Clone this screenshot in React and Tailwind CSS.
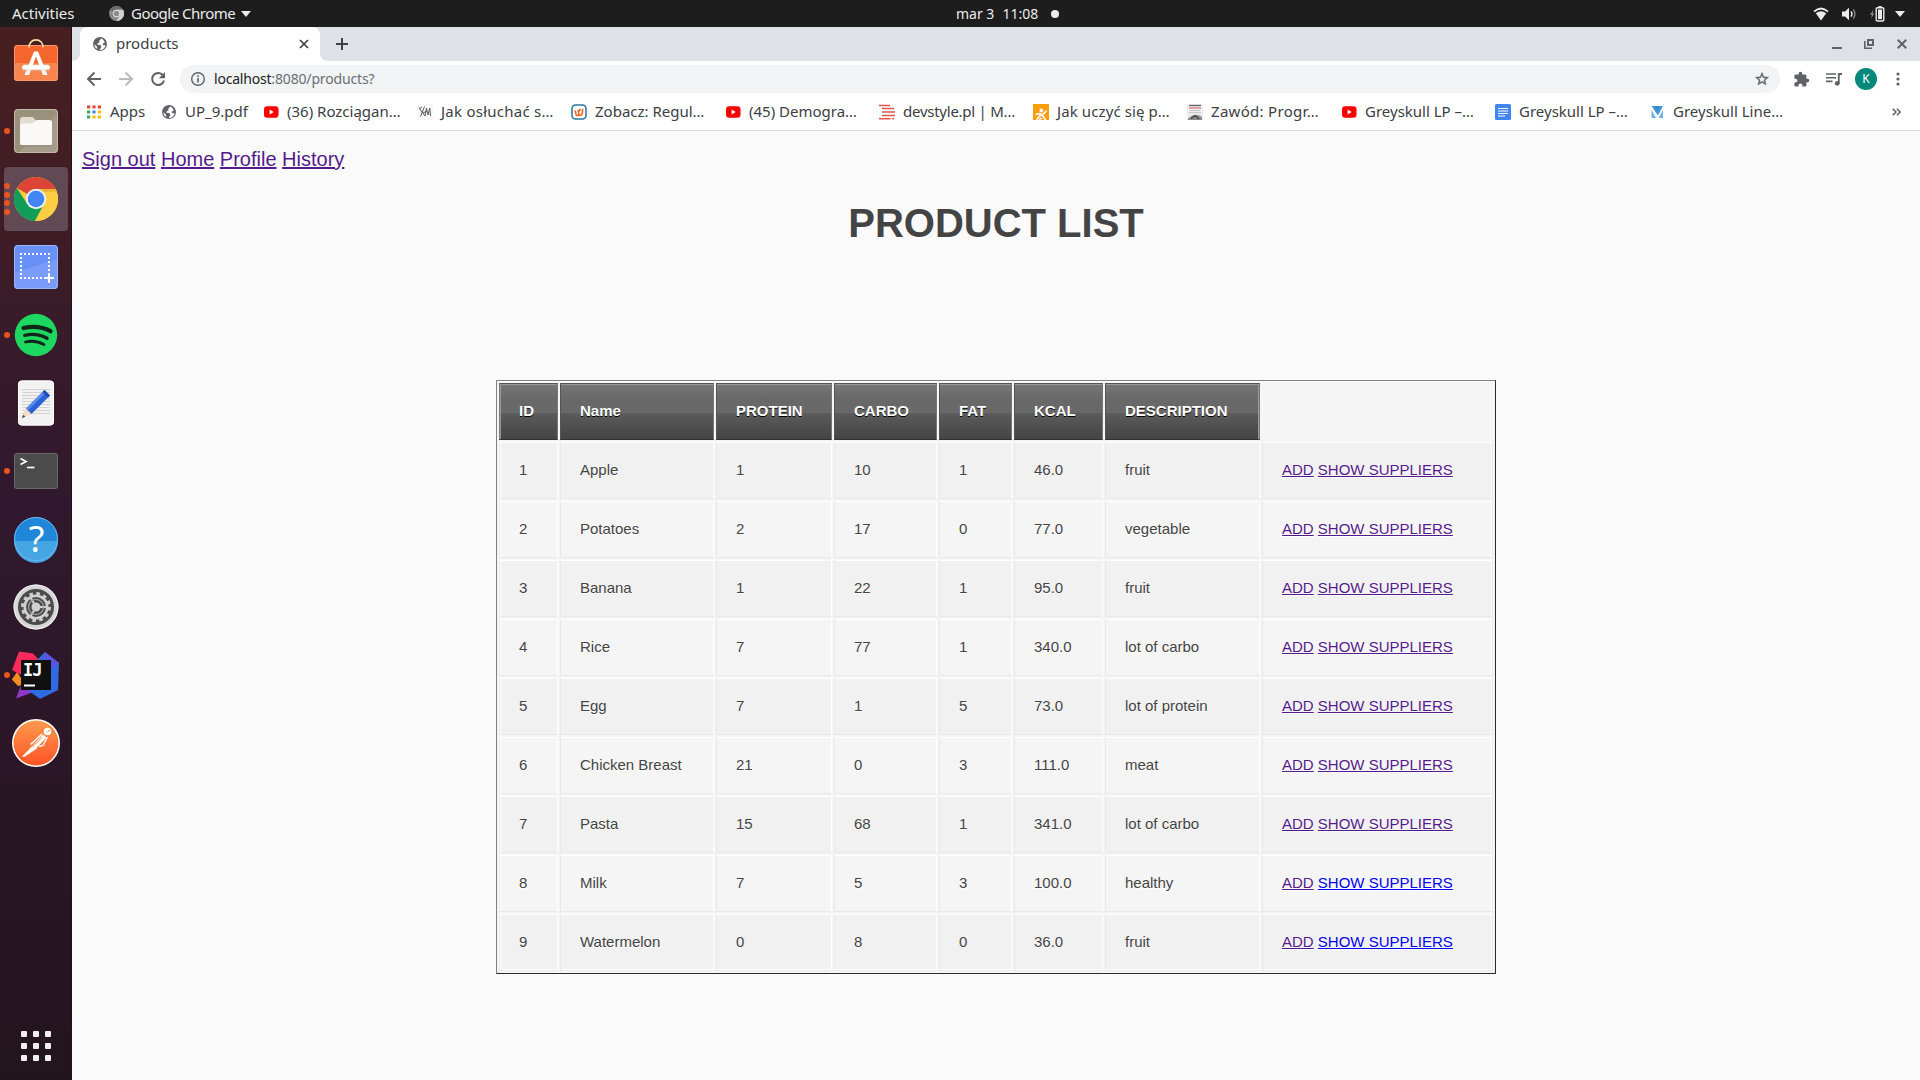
const PRODUCTS = [
  [1, 'Apple', 1, 10, 1, '46.0', 'fruit', true],
  [2, 'Potatoes', 2, 17, 0, '77.0', 'vegetable', true],
  [3, 'Banana', 1, 22, 1, '95.0', 'fruit', true],
  [4, 'Rice', 7, 77, 1, '340.0', 'lot of carbo', true],
  [5, 'Egg', 7, 1, 5, '73.0', 'lot of protein', true],
  [6, 'Chicken Breast', 21, 0, 3, '111.0', 'meat', true],
  [7, 'Pasta', 15, 68, 1, '341.0', 'lot of carbo', true],
  [8, 'Milk', 7, 5, 3, '100.0', 'healthy', false],
  [9, 'Watermelon', 0, 8, 0, '36.0', 'fruit', false],
];

const HEADS = ['ID', 'Name', 'PROTEIN', 'CARBO', 'FAT', 'KCAL', 'DESCRIPTION'];

/* ---------- top bar ---------- */

function TopBar() {
  return (
    <header className="grid h-[27px] shrink-0 grid-cols-[956px_auto_1fr] items-center bg-[#1d1d1d] text-[#ececec]">
      <div className="flex items-center pl-3">
        <span className="w-[97px] text-[15px]">Activities</span>
        <svg className="mr-[7px]" width="15" height="15" viewBox="0 0 16 16">
          <circle cx="8" cy="8" r="8" fill="#8a8a8a" />
          <path d="M8 8 1 4A8 8 0 0 1 15 4H8z" fill="#6c6c6c" />
          <path d="M8 4h7a8 8 0 0 1-7 12l3.500-6z" fill="#d0d0d0" />
          <circle cx="8" cy="8" r="3.900" fill="#e6e6e6" />
          <circle cx="8" cy="8" r="3" fill="#8b8b8b" />
        </svg>
        <span className="text-[15px] tracking-[-0.5px]">Google Chrome</span>
        <svg className="ml-[6px]" width="10" height="6" viewBox="0 0 10 6">
          <path d="M0 0h10L5 6z" fill="#ececec" />
        </svg>
      </div>
      <div className="flex items-center">
        <span className="pb-px text-[14px]">mar 3</span>
        <span className="ml-2 pb-px text-[14px]">11:08</span>
        <span className="ml-[13px] h-2 w-2 rounded-full bg-[#ececec]" />
      </div>
      <div className="flex items-center justify-end pr-[15px]">
        <svg width="16" height="14" viewBox="0 0 16 14">
          <path d="M1 4.700Q8-1.800 15 4.700" fill="none" stroke="#ececec" strokeWidth="1.800" />
          <path d="M2.800 6.300Q8 2 13.200 6.300L8 13.500z" fill="#ececec" />
        </svg>
        <svg className="ml-[13px]" width="15" height="14" viewBox="0 0 15 14">
          <path d="M0 4.500h3L7 .8v12.400l-4-3.700H0z" fill="#ececec" />
          <path d="M9 4.400q2 2.600 0 5.200" fill="none" stroke="#ececec" strokeWidth="1.400" />
          <path d="M11.300 2.500q3.400 4.500 0 9" fill="none" stroke="#8b8b8b" strokeWidth="1.300" />
        </svg>
        <svg className="ml-[13px]" width="15" height="16" viewBox="0 0 15 16">
          <path d="M3.500 3.500 0 8.700h2L1.200 12.500 4.300 7.500H2.600z" fill="#8b8b8b" />
          <path d="M8.500 0h3v1.500h-3z" fill="#ececec" />
          <rect x="6.200" y="1.700" width="7.600" height="13.300" rx="1.200" fill="none" stroke="#ececec" strokeWidth="1.400" />
          <rect x="8" y="3.500" width="4" height="9.700" fill="#ececec" />
        </svg>
        <svg className="ml-[10px]" width="10" height="6" viewBox="0 0 10 6">
          <path d="M0 0h10L5 6z" fill="#ececec" />
        </svg>
      </div>
    </header>
  );
}

/* ---------- dock ---------- */

function SoftwareIcon() {
  return (
    <svg width="48" height="48" viewBox="0 0 48 48">
      <rect x="2" y="6" width="44" height="36" rx="3.500" fill="#f4662d" />
      <path d="M2 24h44v14.500a3.500 3.500 0 0 1-3.500 3.500h-37A3.500 3.500 0 0 1 2 38.500z" fill="#f68550" />
      <rect x="2.500" y="6.500" width="43" height="35" rx="3" fill="none" stroke="#fa9a6b" />
      <path d="M17 8.500c0-5 3.300-7.600 7-7.600s7 2.600 7 7.600" fill="none" stroke="#f7dfa6" strokeWidth="1.700" />
      <path d="M12.500 36 22 12.500h4L35.500 36h-4.600L24 17.500 17.100 36z" fill="#fff" />
      <rect x="10" y="25.800" width="28" height="5" rx="2.500" fill="#fff" />
      <path d="M10.500 31h27" stroke="#e4cdbf" strokeWidth=".8" />
    </svg>
  );
}

function FilesIcon() {
  return (
    <svg width="48" height="48" viewBox="0 0 48 48">
      <rect x="2" y="2" width="44" height="44" rx="4" fill="#9a917c" />
      <path d="M46 6v36a4 4 0 0 1-4 4H6z" fill="#a59d8a" />
      <rect x="2.500" y="2.500" width="43" height="43" rx="3.500" fill="none" stroke="#c2bba9" />
      <path d="M8 13a3 3 0 0 1 3-3h8.500a3 3 0 0 1 2.500 1.300l2 2.700v5H8z" fill="#e3ddd0" />
      <path d="M8 19c0-1.500 1-2.500 2.500-2.500h9c1.300 0 2-.5 2.800-1.400l1.200-1.300c.6-.7 1.300-.8 2-.8h12a2.500 2.500 0 0 1 2.500 2.500V36a2.500 2.500 0 0 1-2.500 2.500h-27A2.500 2.500 0 0 1 8 36z" fill="#faf9f7" />
      <path d="M9 38.800h30" stroke="#7d7566" strokeWidth=".9" />
    </svg>
  );
}

function ChromeIcon() {
  return (
    <svg width="48" height="48" viewBox="0 0 48 48">
      <circle cx="24" cy="24" r="22" fill="#ffcd41" />
      <path d="M24 24 4.900 13A22 22 0 0 1 43.600 14H24z" fill="#db4437" />
      <path d="M4.900 13A22 22 0 0 0 23 46l9-17-8-5-8.700 5z" fill="#0f9d58" />
      <path d="M24 14h19.600A22 22 0 0 1 23 46l9.700-17A10 10 0 0 0 24 14z" fill="#ffcd41" />
      <path d="M24 14h19.600l.8 2.600L30 17z" fill="#d9a72c" opacity=".6" />
      <circle cx="24" cy="24" r="10.200" fill="#f1f1f1" />
      <circle cx="24" cy="24" r="8.300" fill="#4285f4" />
    </svg>
  );
}

function ScreenshotIcon() {
  return (
    <svg width="48" height="48" viewBox="0 0 48 48">
      <rect x="2" y="2" width="44" height="44" rx="4" fill="#6890f6" />
      <path d="M2 30 46 16v26a4 4 0 0 1-4 4H6a4 4 0 0 1-4-4z" fill="#7a9cf8" />
      <rect x="2.500" y="2.500" width="43" height="43" rx="3.500" fill="none" stroke="#9ab6fb" />
      <path d="M8 11h30M8 35h24" stroke="#fff" strokeWidth="2" strokeDasharray="2 2" />
      <path d="M9 14v20M37 14v14" stroke="#fff" strokeWidth="2" strokeDasharray="2 2" />
      <path d="M37 30v10M32 35h10" stroke="#fff" strokeWidth="2" />
    </svg>
  );
}

function SpotifyIcon() {
  return (
    <svg width="48" height="48" viewBox="0 0 48 48">
      <circle cx="24" cy="24" r="21.200" fill="#1ed760" />
      <g fill="none" stroke="#10251a" strokeLinecap="round">
        <path d="M11.500 17c9.500-2 19.500-1 27 3.200" strokeWidth="4.200" />
        <path d="M12.800 24.300c8-1.800 15.500-.8 22.200 3" strokeWidth="3.400" />
        <path d="M13.500 31c6.500-1.500 13-.6 18.500 2.600" strokeWidth="2.800" />
      </g>
    </svg>
  );
}

function EditorIcon() {
  return (
    <svg width="48" height="48" viewBox="0 0 48 48">
      <rect x="6" y="1.500" width="36" height="45" rx="4" fill="#f2f2f2" />
      <rect x="6.500" y="2" width="35" height="44" rx="3.500" fill="none" stroke="#fff" />
      <path d="M10 10.500h28M10 13.500h28M10 16.500h28M10 19.500h28M10 22.500h28M10 25.500h28M10 28.500h28M10 31.500h28M10 34.500h28" stroke="#d2d2d2" />
      <path d="M10 39l3.800-9.500L19.500 35z" fill="#fbdcc0" />
      <path d="M10 39l1.300-3.300 2 2z" fill="#3a3a3a" />
      <path d="M14 29.500 32.500 11l5.500 5.500L19.500 35z" fill="#2c62d6" />
      <path d="M14 29.500 32.500 11l1.900 1.900L15.900 31.400z" fill="#5b8cf0" />
      <path d="M30.500 13l2-2 5.500 5.500-2 2z" fill="#1f4cb3" />
    </svg>
  );
}

function TerminalIcon() {
  return (
    <svg width="48" height="48" viewBox="0 0 48 48">
      <rect x="2" y="6" width="44" height="36" rx="3" fill="#4b4b4b" />
      <rect x="2.500" y="6.500" width="43" height="35" rx="2.500" fill="none" stroke="#686868" />
      <path d="M8.500 11.500l5.500 3-5.500 3" fill="none" stroke="#fff" strokeWidth="1.700" />
      <path d="M15 20.500h7.500" stroke="#fff" strokeWidth="1.700" />
    </svg>
  );
}

function HelpIcon() {
  return (
    <svg width="48" height="48" viewBox="0 0 48 48">
      <circle cx="24" cy="24" r="22" fill="#1f86d8" />
      <path d="M2 26h44a22 22 0 0 1-44 0z" fill="#45a4e4" />
      <circle cx="24" cy="24" r="21.500" fill="none" stroke="#6cb9ee" />
      <text x="24.500" y="37" textAnchor="middle" fill="#fff" fontSize="36" fontFamily="Noto Sans, sans-serif">?</text>
    </svg>
  );
}

function SettingsIcon() {
  return (
    <svg width="48" height="48" viewBox="0 0 48 48">
      <circle cx="24" cy="24" r="22.500" fill="#d6d6d6" />
      <circle cx="24" cy="24" r="21.800" fill="none" stroke="#ededed" strokeWidth="1.200" />
      <circle cx="24" cy="24" r="18" fill="#4b4b4b" />
      <circle cx="24" cy="24" r="13.500" fill="none" stroke="#cfcfcf" strokeWidth="3" strokeDasharray="3.530 3.539" />
      <circle cx="24" cy="24" r="11.300" fill="none" stroke="#cfcfcf" strokeWidth="2.600" />
      <circle cx="24" cy="24" r="4.500" fill="#d0d0d0" />
      <path d="M24 24h11M24 24l-5.500-9.500M24 24l-5.500 9.500" stroke="#cfcfcf" strokeWidth="2" />
      <circle cx="24" cy="24" r="7.500" fill="none" stroke="#a5a5a5" strokeWidth="1.200" />
    </svg>
  );
}

function IdeaIcon() {
  return (
    <svg width="50" height="50" viewBox="0 0 50 50">
      <path d="M.8 29.500 6 22l8 12-7 2z" fill="#f68b1f" />
      <path d="M1 20 8 1.500l14 2L30 12 24 30 8 24z" fill="#fb2a5b" />
      <path d="M12 30 5 48.500 28 40l-6-12z" fill="#9238c9" />
      <path d="M24 12 34 2l14 11-1 27-18 9-11-8z" fill="#2f6be3" />
      <path d="M34 2l14 11-9 8-9-8z" fill="#5a55dc" />
      <rect x="10" y="10" width="30" height="30" fill="#101010" />
      <text x="12" y="26" fill="#fff" fontSize="17" fontWeight="bold" fontFamily="DejaVu Sans Mono, monospace" letterSpacing="-1">IJ</text>
      <path d="M13 35.500h11" stroke="#fff" strokeWidth="2" />
    </svg>
  );
}

function PostmanIcon() {
  return (
    <svg width="48" height="48" viewBox="0 0 48 48">
      <defs>
        <linearGradient id="pm" x1="0" y1="0" x2="0" y2="1">
          <stop offset="0" stopColor="#ff9a4d" />
          <stop offset="1" stopColor="#fd5426" />
        </linearGradient>
      </defs>
      <circle cx="24" cy="24" r="24" fill="#fff" />
      <circle cx="24" cy="24" r="22.500" fill="url(#pm)" />
      <circle cx="35.500" cy="12.500" r="3.800" fill="#fff" />
      <path d="M31 15.500l3.500 3L24.500 29l-7.500 1.500z" fill="#fff" />
      <path d="M20 27.500 10 37.500l2.500.3L25 29.500z" fill="#fff" />
      <path d="M30 15 18.500 25.500" stroke="#fff" strokeWidth="1.500" />
      <path d="M35.500 18 31 26.500l-4 1" fill="none" stroke="#fff" strokeWidth="1.400" />
      <path d="M20 28.500l10-10M35.500 12.500l3-1.500" stroke="#fb7a3c" strokeWidth=".9" />
    </svg>
  );
}

function DockItem({ icon, dots = 0, active = false }) {
  return (
    <div className="flex h-[68px] w-[72px] shrink-0 items-center">
      <div
        className={
          active
            ? 'relative ml-1 flex h-16 w-16 items-center justify-center rounded bg-[#624a54]'
            : 'relative ml-1 flex h-16 w-16 items-center justify-center'
        }
      >
        <div className="absolute top-0 left-0 flex h-full flex-col justify-center gap-[2.7px]">
          {Array.from({ length: dots }, (_, i) => (
            <span key={i} className="h-[6px] w-[6px] rounded-full bg-[#e95420]" />
          ))}
        </div>
        {icon}
      </div>
    </div>
  );
}

function Dock() {
  return (
    <nav className="flex w-[72px] shrink-0 flex-col border-r border-[#241019] bg-linear-to-b from-[#481f20] via-[#31182e] via-45% to-[#22141d] pt-[2px]">
      <DockItem icon={<SoftwareIcon />} />
      <DockItem icon={<FilesIcon />} dots={1} />
      <DockItem icon={<ChromeIcon />} dots={4} active />
      <DockItem icon={<ScreenshotIcon />} />
      <DockItem icon={<SpotifyIcon />} dots={1} />
      <DockItem icon={<EditorIcon />} />
      <DockItem icon={<TerminalIcon />} dots={1} />
      <DockItem icon={<HelpIcon />} />
      <DockItem icon={<SettingsIcon />} />
      <DockItem icon={<IdeaIcon />} dots={1} />
      <DockItem icon={<PostmanIcon />} />
      <div className="mt-auto mb-[19px] ml-[21px] grid w-[30px] grid-cols-3 gap-[6px]">
        {Array.from({ length: 9 }, (_, i) => (
          <span key={i} className="h-[6px] w-[6px] rounded-[1px] bg-[#f0efed]" />
        ))}
      </div>
    </nav>
  );
}

/* ---------- browser chrome ---------- */

function Globe() {
  return (
    <svg width="16" height="16" viewBox="0 0 16 16">
      <circle cx="8" cy="8" r="7" fill="#5f6368" />
      <path d="M9.500 2.500 7.300 4.600l.3 1.700-1.900.9-.4 1.500 3.200.4.800 1.700-1.500 3.300c3.500.2 5.400-2.300 5.700-5l-1.600.5-1.300-1.300.9-1.400 1.300-.1C12 4.400 11 3.200 9.500 2.500z" fill="#fff" />
      <path d="M2.300 8.200l2.600 2.400.5 2.500C3.600 12.200 2.400 10.500 2.300 8.200z" fill="#fff" />
    </svg>
  );
}

function AppsIcon() {
  return (
    <svg width="16" height="16" viewBox="0 0 16 16">
      <path d="M1 1.500h3.200v3H1zM6.400 1.500h3.200v3H6.400zM11.800 1.500H15v3h-3.200z" fill="#ea4335" />
      <path d="M1 6.500h3.200v3H1zM1 11.500h3.200v3H1z" fill="#34a853" />
      <path d="M6.400 6.500h3.200v3H6.400z" fill="#4285f4" />
      <path d="M11.800 6.500H15v3h-3.200zM6.400 11.500h3.200v3H6.400zM11.800 11.500H15v3h-3.200z" fill="#fbbc05" />
    </svg>
  );
}

function YouTubeIcon() {
  return (
    <svg width="16" height="16" viewBox="0 0 16 16">
      <rect x="1" y="2.300" width="14.500" height="11.400" rx="3" fill="#f00" />
      <path d="M6.600 5.600 10.700 8l-4.100 2.400z" fill="#fff" />
    </svg>
  );
}

function SketchIcon() {
  return (
    <svg width="16" height="16" viewBox="0 0 16 16">
      <rect width="16" height="16" fill="#f8f8f8" />
      <path d="M2 3.500l2.500 4M3.500 12.500 7.500 2.500M4.500 7l3.500 5M8 12l1.500-8 1.500 7 1.800-7L13.500 12M2 5l3-2M6 9l4-2" fill="none" stroke="#5c5c5c" strokeWidth="1" />
    </svg>
  );
}

function WykopIcon() {
  return (
    <svg width="16" height="16" viewBox="0 0 16 16">
      <rect x="1" y="1" width="14" height="14" rx="3.500" fill="#fff" stroke="#2c73a6" strokeWidth="1.500" />
      <path d="M4 6.500 5.200 10.800q.5 1 1.500.6l1.300-.6L7 6M8 10.800q.6.900 1.700.4 1.500-.6 1.600-1.800l.4-4.600M7.600 7.500 9.600 5" fill="none" stroke="#f5641d" strokeWidth="1.600" />
    </svg>
  );
}

function DevstyleIcon() {
  return (
    <svg width="16" height="16" viewBox="0 0 16 16">
      <path d="M0 1.500h11M3 4.500h12M3 8h13M3 11.500h13M0 14.700h11.500M13 14.700h2" stroke="#e5534b" strokeWidth="1.500" />
    </svg>
  );
}

function LearnIcon() {
  return (
    <svg width="16" height="16" viewBox="0 0 16 16">
      <rect width="16" height="16" fill="#ff9d0a" />
      <circle cx="8.300" cy="6.500" r="1.900" fill="#fff" />
      <path d="M2.500 10.500l4-.8 3 1.200 4-4M3.500 16q3.500-6 6.500-4l2.500 4M6.500 16q1-2.500 2.500-1" fill="none" stroke="#fff" strokeWidth="1.600" />
    </svg>
  );
}

function BookIcon() {
  return (
    <svg width="16" height="16" viewBox="0 0 16 16">
      <rect width="16" height="16" fill="#ececec" />
      <path d="M2 1.500h12" stroke="#666" strokeWidth="1.300" />
      <path d="M2 4h12" stroke="#d97a74" strokeWidth="1.300" />
      <path d="M3 6.500h10M2 8.500h12" stroke="#c9c9c9" />
      <path d="M1 14.500Q8 8 15 13v3H1z" fill="#8d8d8d" />
      <path d="M4 14.500l4-3 4 3.500" fill="none" stroke="#3c3c3c" strokeWidth="1.200" />
    </svg>
  );
}

function DocsIcon() {
  return (
    <svg width="16" height="16" viewBox="0 0 16 16">
      <rect width="16" height="16" rx="1.500" fill="#4285f4" />
      <path d="M3 4.500h10M3 7h10M3 9.500h10M3 12h7" stroke="#fff" strokeWidth="1.200" />
    </svg>
  );
}

function ShieldIcon() {
  return (
    <svg width="16" height="16" viewBox="0 0 16 16">
      <path d="M2.500 2h11.500L9 11.500 2.500 2z" fill="#3f97d8" />
      <path d="M2.500 6l4.500 8H2.500zM14 6l-4.500 8H14z" fill="#6db3e4" />
      <path d="M6 2.500h4L8 6z" fill="#3583c0" />
    </svg>
  );
}

function Bookmark({ icon, children, wide = 'w-[154px]', track = 'tracking-normal' }) {
  return (
    <div className={`flex shrink-0 items-center gap-2 ${wide}`}>
      {icon}
      <span className={`text-[15px] whitespace-nowrap text-[#3c4043] ${track}`}>{children}</span>
    </div>
  );
}

function TabStrip() {
  return (
    <div className="flex h-[34px] shrink-0 bg-[#dee1e6]">
      <div className="w-2 bg-white">
        <div className="h-full rounded-br-lg bg-[#dee1e6]" />
      </div>
      <div className="flex w-60 items-center rounded-t-lg bg-white pl-3">
        <Globe />
        <span className="ml-2 flex-1 pb-[2px] text-[15px] text-[#3c4043]">products</span>
        <svg className="mr-[11px]" width="10" height="10" viewBox="0 0 10 10">
          <path d="M1 1l8 8M9 1 1 9" stroke="#3c4043" strokeWidth="1.700" />
        </svg>
      </div>
      <div className="w-2 bg-white">
        <div className="h-full rounded-bl-lg bg-[#dee1e6]" />
      </div>
      <div className="flex flex-1 items-center">
        <svg className="ml-[8px]" width="12" height="12" viewBox="0 0 12 12">
          <path d="M6 0v12M0 6h12" stroke="#3c4043" strokeWidth="2" />
        </svg>
      </div>
      <div className="flex items-center pr-[13px]">
        <svg width="10" height="10" viewBox="0 0 10 10">
          <path d="M0 9h10" stroke="#5f6368" strokeWidth="2" />
        </svg>
        <svg className="ml-[22px]" width="10" height="10" viewBox="0 0 10 10">
          <rect x="4" y="1" width="5" height="5" fill="none" stroke="#5f6368" strokeWidth="2" />
          <path d="M.8 2v7.200H8" fill="none" stroke="#5f6368" strokeWidth="1.600" />
        </svg>
        <svg className="ml-[23px]" width="10" height="10" viewBox="0 0 10 10">
          <path d="M.7.7l8.600 8.600M9.300.7.7 9.300" stroke="#5f6368" strokeWidth="2" />
        </svg>
      </div>
    </div>
  );
}

function Toolbar() {
  return (
    <div className="flex h-9 shrink-0 items-center bg-white pl-[14px]">
      <svg width="16" height="16" viewBox="0 0 16 16">
        <path d="M15 8H2.500M8.500 1.500 2 8l6.500 6.500" fill="none" stroke="#5f6368" strokeWidth="2" />
      </svg>
      <svg className="ml-4" width="16" height="16" viewBox="0 0 16 16">
        <path d="M1 8h12.500M7.500 1.500 14 8l-6.500 6.500" fill="none" stroke="#babcbe" strokeWidth="2" />
      </svg>
      <svg className="ml-4" width="16" height="16" viewBox="0 0 16 16">
        <path d="M13.300 4.800A6 6 0 1 0 14 9.500" fill="none" stroke="#5f6368" strokeWidth="2" />
        <path d="M15 1v6.200H8.800z" fill="#5f6368" />
      </svg>
      <div className="ml-[14px] flex h-7 w-[1600px] items-center rounded-full bg-[#f1f3f4] pr-[10px] pl-[10px]">
        <svg width="16" height="16" viewBox="0 0 16 16">
          <circle cx="8" cy="8" r="6.300" fill="none" stroke="#5f6368" strokeWidth="1.400" />
          <path d="M8 7v4.500M8 4.300v1.600" stroke="#5f6368" strokeWidth="1.600" />
        </svg>
        <span className="ml-2 flex-1 pb-[2px] text-[14px] tracking-[-0.16px] text-[#6b6f73]">
          <span className="tracking-[-0.2px] text-[#202124]">localhost</span>:8080/products?
        </span>
        <svg width="16" height="16" viewBox="0 0 24 24">
          <path d="M22 9.240l-7.190-.62L12 2 9.190 8.630 2 9.240l5.460 4.730L5.820 21 12 17.270 18.180 21l-1.630-7.030L22 9.240zM12 15.400l-3.760 2.270 1-4.280-3.320-2.880 4.380-.38L12 6.100l1.710 4.040 4.380.38-3.320 2.880 1 4.280L12 15.400z" fill="#5f6368" stroke="#5f6368" strokeWidth=".6" />
        </svg>
      </div>
      <svg className="ml-[13px]" width="17" height="17" viewBox="0 0 24 24">
        <path d="M20.500 11H19V7c0-1.100-.9-2-2-2h-4V3.500a2.500 2.500 0 0 0-5 0V5H4c-1.100 0-1.990.9-1.990 2v3.800H3.500c1.490 0 2.700 1.210 2.700 2.700s-1.210 2.700-2.700 2.700H2V20c0 1.100.9 2 2 2h3.800v-1.500c0-1.490 1.210-2.700 2.700-2.700s2.700 1.210 2.700 2.700V22H17c1.100 0 2-.9 2-2v-4h1.500a2.500 2.500 0 0 0 0-5z" fill="#5f6368" />
      </svg>
      <svg className="ml-4" width="16" height="16" viewBox="0 0 16 16">
        <path d="M0 3h10M0 6.700h10M0 10.400h6.500" stroke="#5f6368" strokeWidth="1.600" />
        <path d="M12.800 12.500V3H16" fill="none" stroke="#5f6368" strokeWidth="1.800" />
        <circle cx="11.200" cy="12.300" r="2.400" fill="#5f6368" />
      </svg>
      <span className="ml-[13px] flex h-[22px] w-[22px] items-center justify-center rounded-full bg-[#00897b] text-[12px] text-white">K</span>
      <svg className="ml-[19px]" width="4" height="14" viewBox="0 0 4 14">
        <circle cx="2" cy="2" r="1.600" fill="#5f6368" />
        <circle cx="2" cy="7" r="1.600" fill="#5f6368" />
        <circle cx="2" cy="12" r="1.600" fill="#5f6368" />
      </svg>
    </div>
  );
}

function BookmarkBar() {
  return (
    <div className="flex h-[34px] shrink-0 items-center border-b border-[#d5d7da] bg-white pb-[4px] pl-[14px]">
      <Bookmark icon={<AppsIcon />} wide="w-[75px]">Apps</Bookmark>
      <Bookmark icon={<Globe />} wide="w-[102px]">UP_9.pdf</Bookmark>
      <Bookmark icon={<YouTubeIcon />}>(36) Rozciągan…</Bookmark>
      <Bookmark icon={<SketchIcon />} track="tracking-[0.25px]">Jak osłuchać s…</Bookmark>
      <Bookmark icon={<WykopIcon />}>Zobacz: Regul…</Bookmark>
      <Bookmark icon={<YouTubeIcon />}>(45) Demogra…</Bookmark>
      <Bookmark icon={<DevstyleIcon />} track="tracking-[-0.25px]">devstyle.pl | M…</Bookmark>
      <Bookmark icon={<LearnIcon />} track="tracking-[0.1px]">Jak uczyć się p…</Bookmark>
      <Bookmark icon={<BookIcon />} track="tracking-[0.3px]">Zawód: Progr…</Bookmark>
      <Bookmark icon={<YouTubeIcon />}>Greyskull LP –…</Bookmark>
      <Bookmark icon={<DocsIcon />}>Greyskull LP –…</Bookmark>
      <Bookmark icon={<ShieldIcon />}>Greyskull Line…</Bookmark>
      <svg className="mr-[19px] ml-auto" width="9" height="8" viewBox="0 0 9 8">
        <path d="M.7.7 4 4 .7 7.300M4.900.7 8.200 4 4.900 7.300" fill="none" stroke="#5f6368" strokeWidth="1.600" />
      </svg>
    </div>
  );
}

/* ---------- page ---------- */

function HeadCell({ children }) {
  return (
    <th className="relative border border-t-[#555] border-r-[#777] border-b-[#333] border-l-[#555] bg-linear-to-b from-[#777] to-[#444] pt-[19px] pr-5 pb-[21px] pl-[19px] text-left font-bold text-white shadow-[inset_0_1px_0_#999] [text-shadow:0_1px_0_#000] after:absolute after:top-1/4 after:left-0 after:mt-px after:block after:h-1/4 after:w-full after:bg-linear-to-b after:from-white/0 after:to-white/8 after:content-[''] first:border-l-[#777] first:shadow-[inset_1px_1px_0_#999] last:shadow-[inset_-1px_1px_0_#999]">
      {children}
    </th>
  );
}

function Cell({ children }) {
  return (
    <td className="border border-t-white border-r-white border-b-[#e8e8e8] border-l-[#e8e8e8] pt-[19px] pr-5 pb-[21px] pl-[19px] group-odd:bg-[#f1f1f1] first:shadow-[inset_1px_0_0_#fff] last:border-r-[#e8e8e8] last:shadow-[inset_-1px_0_0_#fff] group-last:shadow-[inset_0_-1px_0_#fff] group-last:first:shadow-[inset_1px_-1px_0_#fff] group-last:last:shadow-[inset_-1px_-1px_0_#fff]">
      {children}
    </td>
  );
}

function ProductPage() {
  return (
    <main className="flex-1 bg-[#fafafa] font-['Liberation_Sans',Arial,sans-serif] text-[#444] [text-shadow:0_1px_0_#fff]">
      <div className="flex gap-[5.56px] pt-[13px] pl-[10px] text-[20px] leading-[30px] text-[#551a8b]">
        <a className="underline">Sign out</a>
        <a className="underline">Home</a>
        <a className="underline">Profile</a>
        <a className="underline">History</a>
      </div>
      <h1 className="mt-[34px] text-center text-[40px] leading-[30px] font-bold">PRODUCT LIST</h1>
      <table className="mx-auto mt-[142px] w-[1000px] table-fixed border-separate border-spacing-[2px] border border-t-[#808080] border-r-[#2c2c2c] border-b-[#2c2c2c] border-l-[#808080] bg-[#f5f5f5] text-[15px] leading-[15px] shadow-[inset_0_1px_0_#fff]">
        <colgroup>
          <col className="w-[59px]" />
          <col className="w-[154px]" />
          <col className="w-[116px]" />
          <col className="w-[103px]" />
          <col className="w-[73px]" />
          <col className="w-[89px]" />
          <col className="w-[155px]" />
          <col className="w-[231px]" />
        </colgroup>
        <thead>
          <tr>
            {HEADS.map((h) => (
              <HeadCell key={h}>{h}</HeadCell>
            ))}
          </tr>
        </thead>
        <tbody>
          {PRODUCTS.map(([id, name, protein, carbo, fat, kcal, description, visited]) => (
            <tr key={id} className="group">
              <Cell>{id}</Cell>
              <Cell>{name}</Cell>
              <Cell>{protein}</Cell>
              <Cell>{carbo}</Cell>
              <Cell>{fat}</Cell>
              <Cell>{kcal}</Cell>
              <Cell>{description}</Cell>
              <Cell>
                <a className="text-[#551a8b] underline">ADD</a>{' '}
                <a className={visited ? 'text-[#551a8b] underline' : 'text-[#0000ee] underline'}>SHOW SUPPLIERS</a>
              </Cell>
            </tr>
          ))}
        </tbody>
      </table>
    </main>
  );
}

export default function App() {
  return (
    <div className="flex h-[1080px] w-[1920px] flex-col overflow-hidden font-['Noto_Sans','Open_Sans',sans-serif]">
      <TopBar />
      <div className="flex min-h-0 flex-1">
        <Dock />
        <div className="flex flex-1 flex-col">
          <TabStrip />
          <Toolbar />
          <BookmarkBar />
          <ProductPage />
        </div>
      </div>
    </div>
  );
}
